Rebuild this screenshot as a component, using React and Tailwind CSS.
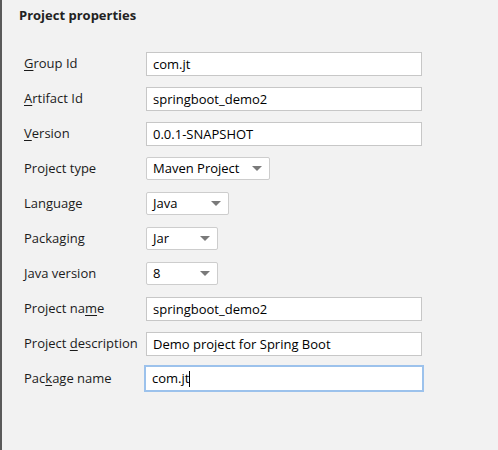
import { useState } from "react";

const fields = [
    { label: "Group Id", key: "G", at: 0, kind: "text", value: "com.jt" },
    { label: "Artifact Id", key: "A", at: 0, kind: "text", value: "springboot_demo2" },
    { label: "Version", key: "V", at: 0, kind: "text", value: "0.0.1-SNAPSHOT" },
    { label: "Project type", kind: "select", value: "Maven Project", width: "w-[124px]" },
    { label: "Language", kind: "select", value: "Java", width: "w-[83px]" },
    { label: "Packaging", kind: "select", value: "Jar", width: "w-[72px]" },
    { label: "Java version", kind: "select", value: "8", width: "w-[72px]" },
    { label: "Project name", key: "m", at: 10, kind: "text", value: "springboot_demo2" },
    { label: "Project description", key: "d", at: 8, kind: "text", value: "Demo project for Spring Boot" },
    { label: "Package name", key: "k", at: 3, kind: "text", value: "com.jt", focused: true },
];

function Label({ label, at, mnemonic }) {
    if (!mnemonic) return <span>{label}</span>;
    return (
        <span>
            {label.slice(0, at)}
            <span className="underline underline-offset-2">{label.slice(at, at + 1)}</span>
            {label.slice(at + 1)}
        </span>
    );
}

function Dropdown({ value, width }) {
    return (
        <div className={`${width} h-[23px] bg-white border border-[#cdcdcd] rounded-[2px] flex items-center justify-between pl-[6px] pr-[7px] text-black`}>
            <span>{value}</span>
            <svg width="10" height="5" viewBox="0 0 10 5">
                <polygon points="0,0 10,0 5,5" fill="#7a7a7a" />
            </svg>
        </div>
    );
}

function TextField({ value, focused }) {
    const [text, setText] = useState(value);
    if (focused) {
        // focused field, drawn with its caret
        return (
            <div className="ml-[-2px] w-[280px] h-[27px] border-2 border-[#9cc2ec] bg-white flex items-center pl-[6px] text-black">
                <span>{text}</span>
                <span className="w-px h-[16px] bg-black" />
            </div>
        );
    }
    return (
        <input
            value={text}
            onChange={(e) => setText(e.target.value)}
            className="w-[276px] h-[24px] border border-[#c7c7c7] bg-white px-[6px] outline-none text-black"
        />
    );
}

export default function App() {
    return (
        <div
            className="w-[498px] h-[450px] bg-[#f2f2f2] border-l-2 border-[#5a5a5a] text-[13px] text-[#1b1b1b]"
            style={{ fontFamily: '"Open Sans", "Noto Sans", sans-serif' }}
        >
            <div className="pl-[17px] pt-[6px] h-[24px] leading-[18px] font-bold text-[#222]">Project properties</div>
            <div className="mt-[22px] flex flex-col pl-[22px]">
                {fields.map((f) => (
                    <div key={f.label} className="h-[35px] flex items-center">
                        <div className="w-[122px]">
                            <Label label={f.label} at={f.at} mnemonic={f.key} />
                        </div>
                        {f.kind === "select" ? (
                            <Dropdown value={f.value} width={f.width} />
                        ) : (
                            <TextField value={f.value} focused={f.focused} />
                        )}
                    </div>
                ))}
            </div>
        </div>
    );
}
